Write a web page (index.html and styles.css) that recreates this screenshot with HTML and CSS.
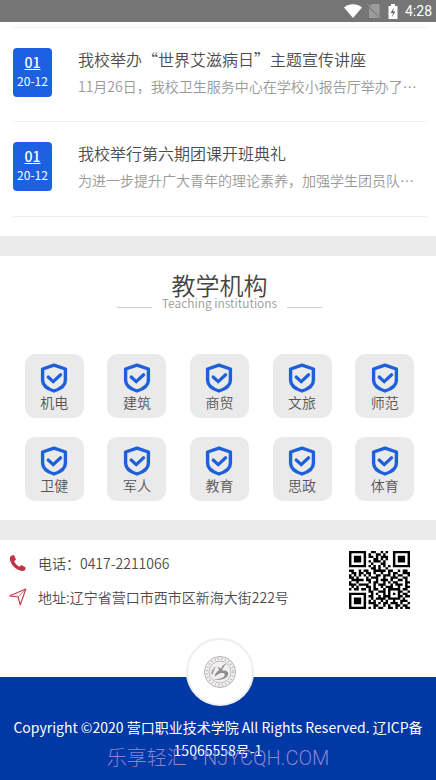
FILE: index.html
```
<!DOCTYPE html>
<html lang="zh-CN">
<head>
<meta charset="utf-8">
<meta name="viewport" content="width=device-width, initial-scale=1">
<title>营口职业技术学院</title>
<link rel="stylesheet" href="styles.css">
</head>
<body>
<svg class="symbols" aria-hidden="true">
  <symbol id="shield" viewBox="0 0 28 30">
    <path d="M14 2.200 25.400 6v11.200c0 5.200-4.600 8.600-11.400 10.800C7.200 25.800 2.600 22.400 2.600 17.200V6z" fill="none" stroke="#1d60da" stroke-width="3.400" stroke-linejoin="round"/>
    <path d="m8.200 14 5 4.600 7.400-6.800" fill="none" stroke="#1d60da" stroke-width="3.200" stroke-linecap="round"/>
  </symbol>
</svg>

<header class="status">
  <svg class="status-wifi" viewBox="0 0 18 14" aria-hidden="true"><path d="M0 3.500C5-.8 13-.8 18 3.500L9 14z" fill="#fff"/></svg>
  <svg class="status-sim" viewBox="0 0 14 14" aria-hidden="true"><path d="M5 0h7.500v14H2V3z" fill="#9c9c9c"/><path d="m0 1 14 13" stroke="#757575" stroke-width="2"/><path d="M.5.500 13.500 13.500" stroke="#a4a4a4"/></svg>
  <svg class="status-battery" viewBox="0 0 10 15" aria-hidden="true"><path d="M3 0h4v2h2.500v13H.5V2H3z" fill="#fff"/><path d="M6 3.500 2.500 9H5l-1 4 3.500-5.500H5z" fill="#666"/></svg>
  <span class="status-time">4:28</span>
</header>

<main>
  <ul class="news">
    <li class="news-item">
      <div class="date"><span class="date-day">01</span><span class="date-month">20-12</span></div>
      <div class="news-body">
        <h3 class="news-title">我校举办“世界艾滋病日”主题宣传讲座</h3>
        <p class="news-text">11月26日，我校卫生服务中心在学校小报告厅举办了…</p>
      </div>
    </li>
    <li class="news-item">
      <div class="date"><span class="date-day">01</span><span class="date-month">20-12</span></div>
      <div class="news-body">
        <h3 class="news-title">我校举行第六期团课开班典礼</h3>
        <p class="news-text">为进一步提升广大青年的理论素养，加强学生团员队…</p>
      </div>
    </li>
  </ul>

  <section class="teaching">
    <h2 class="teaching-title">教学机构</h2>
    <p class="teaching-sub">Teaching institutions</p>
    <nav class="tiles">
      <a class="tile" href="#"><svg class="tile-icon" aria-hidden="true"><use href="#shield"/></svg>机电</a>
      <a class="tile" href="#"><svg class="tile-icon" aria-hidden="true"><use href="#shield"/></svg>建筑</a>
      <a class="tile" href="#"><svg class="tile-icon" aria-hidden="true"><use href="#shield"/></svg>商贸</a>
      <a class="tile" href="#"><svg class="tile-icon" aria-hidden="true"><use href="#shield"/></svg>文旅</a>
      <a class="tile" href="#"><svg class="tile-icon" aria-hidden="true"><use href="#shield"/></svg>师范</a>
      <a class="tile" href="#"><svg class="tile-icon" aria-hidden="true"><use href="#shield"/></svg>卫健</a>
      <a class="tile" href="#"><svg class="tile-icon" aria-hidden="true"><use href="#shield"/></svg>军人</a>
      <a class="tile" href="#"><svg class="tile-icon" aria-hidden="true"><use href="#shield"/></svg>教育</a>
      <a class="tile" href="#"><svg class="tile-icon" aria-hidden="true"><use href="#shield"/></svg>思政</a>
      <a class="tile" href="#"><svg class="tile-icon" aria-hidden="true"><use href="#shield"/></svg>体育</a>
    </nav>
  </section>

  <section class="contact">
    <address class="contact-list">
      <p class="contact-row">
        <svg class="contact-icon" viewBox="0 0 18 18" aria-hidden="true"><path d="M2.300 1.800 5 1l2 4.600-1.800 1.600c1 2.400 2.900 4.400 5.300 5.500l1.800-1.700 4.400 2.400-.5 2.500c-1 1-2.800 1.200-4.400.8C6 15.200 1.600 10.200.9 5.200c-.2-1.500.3-2.700 1.400-3.400z" fill="#c13443"/></svg>
        电话：0417-2211066
      </p>
      <p class="contact-row">
        <svg class="contact-icon" viewBox="0 0 18 18" aria-hidden="true"><path d="M16.800 1 11.200 17l-2-8L.8 7.800z" fill="none" stroke="#c8404e" stroke-width="1.200" stroke-linejoin="round"/><path d="m9.200 9 7.600-8" stroke="#c8404e" stroke-width=".7"/></svg>
        地址:辽宁省营口市西市区新海大街222号
      </p>
    </address>
    <svg class="qr" viewBox="0 0 25 25" preserveAspectRatio="none" role="img" aria-label="二维码"><path id="qr-modules"/></svg>
  </section>
</main>

<footer class="footer">
  <div class="emblem">
    <svg class="emblem-logo" viewBox="0 0 34 34" aria-hidden="true">
      <circle cx="17" cy="17" r="15.500" fill="#f5f4f4" stroke="#b5b1b0"/>
      <circle cx="17" cy="17" r="13.200" fill="none" stroke="#c4c0bf" stroke-width="2" stroke-dasharray="1.500 2"/>
      <circle cx="17" cy="17" r="11" fill="#f1f0f0" stroke="#bdb8b7"/>
      <path d="M14.500 11.500 18 13.800C19.500 10.500 21 9 24 8.800c-2.500 1.700-4 3.700-5 6.700 4.500-.5 7 1 6 4.500-1.200 4-9 6-14.500 4 5.500.5 10.800-1 11.300-4 .3-2-2.800-2.300-5.300-1.500-1.700.8-3.500 2-5 3.500.3-3.500 2.300-5.500 4.800-7z" fill="#918b89"/>
      <path d="M8 18c.5-3 2.500-5.500 6-6.500-2.500 2-3.800 4.500-4 8.500z" fill="#a8a3a1"/>
    </svg>
  </div>
  <p class="copyright">Copyright ©2020 营口职业技术学院 All Rights Reserved. 辽ICP备15065558号-1</p>
  <p class="watermark">乐享轻汇 • NJYCQH.COM</p>
</footer>
<script src="qr.js"></script>
</body>
</html>
```
FILE: styles.css
```
* {
  box-sizing: border-box;
}

body {
  display: flex;
  flex-direction: column;
  min-height: 100vh;
  margin: 0;
  background: #fff;
  color: #4c4c4c;
  font-family: "Noto Sans CJK SC", sans-serif;
  font-size: 14px;
  font-weight: 350;
  line-height: 20px;
}

h2, h3, p, ul {
  margin: 0;
  padding: 0;
  font-weight: inherit;
}

.symbols {
  position: absolute;
  width: 0;
  height: 0;
}

.status {
  display: flex;
  align-items: center;
  justify-content: flex-end;
  height: 22px;
  padding-right: 4px;
  background: #757575;
  color: #fff;
}

.status-wifi {
  width: 18px;
  height: 14px;
  margin-right: 5px;
}

.status-sim {
  width: 14px;
  height: 14px;
  margin-right: 7px;
}

.status-battery {
  width: 10px;
  height: 15px;
  margin-right: 7px;
}

.status-time {
  font-family: Roboto, sans-serif;
  font-weight: 400;
}

.news {
  margin: 5px 9px 0 13px;
  padding-bottom: 19px;
  border-top: 1px solid #eee;
  list-style: none;
}

.news-item {
  display: flex;
  gap: 26px;
  height: 94px;
  padding-top: 20px;
  border-bottom: 1px solid #eee;
}

.news-item + .news-item {
  height: 95px;
}

.date {
  display: flex;
  flex: none;
  flex-direction: column;
  align-items: center;
  width: 39px;
  height: 49px;
  padding-top: 4px;
  border-radius: 4px;
  background: #1d60e2;
  color: #fff;
  font-weight: 400;
}

.date-day {
  font-weight: 500;
  text-decoration: underline;
}

.date-month {
  font-size: 12px;
  line-height: 18px;
}

.news-body {
  min-width: 0;
}

.news-title {
  font-size: 16px;
  line-height: 22px;
}

.news-text {
  padding-top: 6px;
  overflow: hidden;
  color: #999;
  white-space: nowrap;
}

.teaching {
  padding: 11px 10px 19px 13px;
  border: solid #ebeaea;
  border-width: 20px 0;
}

.teaching-title {
  color: #444;
  font-size: 24px;
  line-height: 36px;
  text-align: center;
}

.teaching-sub {
  display: flex;
  align-items: center;
  justify-content: center;
  gap: 10px;
  height: 16px;
  margin-top: -8px;
  color: #999;
  font-size: 12px;
}

.teaching-sub::before,
.teaching-sub::after {
  width: 35px;
  height: 1px;
  margin-top: 8px;
  background: #ccc;
  content: "";
}

.tiles {
  display: grid;
  grid-template-columns: repeat(5, 1fr);
  row-gap: 19px;
  justify-items: center;
  margin-top: 43px;
}

.tile {
  display: flex;
  flex-direction: column;
  align-items: center;
  width: 59px;
  height: 64px;
  padding-top: 9px;
  border-radius: 10px;
  background: #ebeaea;
  color: #555;
  line-height: 18px;
  text-decoration: none;
}

.tile-icon {
  width: 28px;
  height: 30px;
}

.contact {
  display: flex;
  justify-content: space-between;
  height: 137px;
  padding: 11px 26px 0 9px;
}

.contact-list {
  display: grid;
  gap: 14px;
  align-content: start;
  padding-top: 2px;
  font-style: normal;
}

.contact-row {
  display: flex;
  align-items: center;
  gap: 11px;
}

.contact-icon {
  width: 18px;
  height: 18px;
}

.qr {
  width: 61px;
  height: 58px;
}

.footer {
  position: relative;
  flex: 1;
  padding: 39px 12px 5px;
  background: #0038a5;
  color: #fff;
  font-weight: 400;
  text-align: center;
}

.emblem {
  position: absolute;
  top: -39px;
  left: 50%;
  display: grid;
  place-items: center;
  width: 68px;
  height: 68px;
  margin-left: -32px;
  border: 2px solid #eee;
  border-radius: 50%;
  background: #fff;
}

.emblem-logo {
  width: 34px;
  height: 34px;
}

.copyright {
  line-height: 23px;
}

.watermark {
  position: absolute;
  right: 0;
  bottom: 8px;
  left: 0;
  color: #8c82cc;
  font-family: Roboto, "Noto Sans CJK SC", sans-serif;
  font-size: 20px;
  font-weight: 300;
  line-height: 28px;
}
```
FILE: qr.js
```
// One string per row of modules; "#" is a dark module.
const rows = [
  "#######..##..#.#..#######",
  "#.....#.#..##.#...#.....#",
  "#.###.#.##.#.###..#.###.#",
  "#.###.#...##.#.#..#.###.#",
  "#.###.#.#.###.#...#.###.#",
  "#.....#..#...##...#.....#",
  "#######.#.#.#.#.#.#######",
  ".........##.#..#.........",
  "##..#.##..#####.##..#.##.",
  ".##.##.##.#..#..#.##..###",
  "#.#.#.#.#..##.###.#.##..#",
  "##.#...#.###..#..###..##.",
  ".#####.##..#.###.#..##.#.",
  "#..#....#.##..#.#.##...##",
  "###.####..#.###..#.###.#.",
  ".#.#...##.#..#.###..#..##",
  "#.##.##.#.##..#.#####.##.",
  "........##..###.#...##..#",
  "#######..#.#..#.#.#.#.##.",
  "#.....#.##..#.###...##.##",
  "#.###.#..#.####.#####.#..",
  "#.###.#.#.#..#.#..#..###.",
  "#.###.#.###.#.##.###.#..#",
  "#.....#...##..#.#..##.##.",
  "#######.#.#.##..##.#.#.##"
];

const cells = rows.flatMap((row, y) =>
  [...row].map((cell, x) => (cell === "#" ? `M${x} ${y}h1v1h-1z` : ""))
);

document.getElementById("qr-modules").setAttribute("d", cells.join(""));
```
